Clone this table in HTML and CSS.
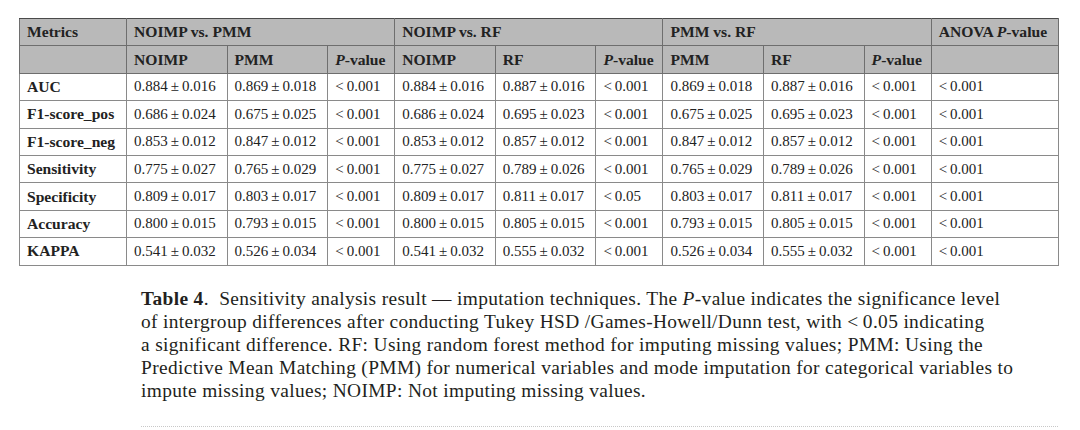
FILE: index.html
```html
<!DOCTYPE html>
<html>
<head>
<meta charset="utf-8">
<link rel="stylesheet" href="styles.css">
</head>
<body>
<div class="page">
  <table class="results">
    <colgroup>
      <col class="c-metric"><col class="c-val"><col class="c-val"><col class="c-p">
      <col class="c-val"><col class="c-val"><col class="c-p">
      <col class="c-val"><col class="c-val"><col class="c-p"><col class="c-anova">
    </colgroup>
    <thead>
      <tr class="h1">
        <th>Metrics</th>
        <th colspan="3">NOIMP vs. PMM</th>
        <th colspan="3">NOIMP vs. RF</th>
        <th colspan="3">PMM vs. RF</th>
        <th>ANOVA <i>P</i>-value</th>
      </tr>
      <tr class="h2">
        <th></th>
        <th>NOIMP</th><th>PMM</th><th><i>P</i>-value</th>
        <th>NOIMP</th><th>RF</th><th><i>P</i>-value</th>
        <th>PMM</th><th>RF</th><th><i>P</i>-value</th>
        <th></th>
      </tr>
    </thead>
    <tbody>
      <tr><th>AUC</th><td>0.884&#8201;±&#8201;0.016</td><td>0.869&#8201;±&#8201;0.018</td><td>&lt;&#8201;0.001</td><td>0.884&#8201;±&#8201;0.016</td><td>0.887&#8201;±&#8201;0.016</td><td>&lt;&#8201;0.001</td><td>0.869&#8201;±&#8201;0.018</td><td>0.887&#8201;±&#8201;0.016</td><td>&lt;&#8201;0.001</td><td>&lt;&#8201;0.001</td></tr>
      <tr><th>F1-score_pos</th><td>0.686&#8201;±&#8201;0.024</td><td>0.675&#8201;±&#8201;0.025</td><td>&lt;&#8201;0.001</td><td>0.686&#8201;±&#8201;0.024</td><td>0.695&#8201;±&#8201;0.023</td><td>&lt;&#8201;0.001</td><td>0.675&#8201;±&#8201;0.025</td><td>0.695&#8201;±&#8201;0.023</td><td>&lt;&#8201;0.001</td><td>&lt;&#8201;0.001</td></tr>
      <tr><th>F1-score_neg</th><td>0.853&#8201;±&#8201;0.012</td><td>0.847&#8201;±&#8201;0.012</td><td>&lt;&#8201;0.001</td><td>0.853&#8201;±&#8201;0.012</td><td>0.857&#8201;±&#8201;0.012</td><td>&lt;&#8201;0.001</td><td>0.847&#8201;±&#8201;0.012</td><td>0.857&#8201;±&#8201;0.012</td><td>&lt;&#8201;0.001</td><td>&lt;&#8201;0.001</td></tr>
      <tr><th>Sensitivity</th><td>0.775&#8201;±&#8201;0.027</td><td>0.765&#8201;±&#8201;0.029</td><td>&lt;&#8201;0.001</td><td>0.775&#8201;±&#8201;0.027</td><td>0.789&#8201;±&#8201;0.026</td><td>&lt;&#8201;0.001</td><td>0.765&#8201;±&#8201;0.029</td><td>0.789&#8201;±&#8201;0.026</td><td>&lt;&#8201;0.001</td><td>&lt;&#8201;0.001</td></tr>
      <tr><th>Specificity</th><td>0.809&#8201;±&#8201;0.017</td><td>0.803&#8201;±&#8201;0.017</td><td>&lt;&#8201;0.001</td><td>0.809&#8201;±&#8201;0.017</td><td>0.811&#8201;±&#8201;0.017</td><td>&lt;&#8201;0.05</td><td>0.803&#8201;±&#8201;0.017</td><td>0.811&#8201;±&#8201;0.017</td><td>&lt;&#8201;0.001</td><td>&lt;&#8201;0.001</td></tr>
      <tr><th>Accuracy</th><td>0.800&#8201;±&#8201;0.015</td><td>0.793&#8201;±&#8201;0.015</td><td>&lt;&#8201;0.001</td><td>0.800&#8201;±&#8201;0.015</td><td>0.805&#8201;±&#8201;0.015</td><td>&lt;&#8201;0.001</td><td>0.793&#8201;±&#8201;0.015</td><td>0.805&#8201;±&#8201;0.015</td><td>&lt;&#8201;0.001</td><td>&lt;&#8201;0.001</td></tr>
      <tr><th>KAPPA</th><td>0.541&#8201;±&#8201;0.032</td><td>0.526&#8201;±&#8201;0.034</td><td>&lt;&#8201;0.001</td><td>0.541&#8201;±&#8201;0.032</td><td>0.555&#8201;±&#8201;0.032</td><td>&lt;&#8201;0.001</td><td>0.526&#8201;±&#8201;0.034</td><td>0.555&#8201;±&#8201;0.032</td><td>&lt;&#8201;0.001</td><td>&lt;&#8201;0.001</td></tr>
    </tbody>
  </table>

  <p class="caption"><b>Table 4</b>.&nbsp; Sensitivity analysis result — imputation techniques. The <i>P</i>-value indicates the significance level<br>of intergroup differences after conducting Tukey HSD /Games-Howell/Dunn test, with &lt;&#8201;0.05 indicating<br>a significant difference. RF: Using random forest method for imputing missing values; PMM: Using the<br>Predictive Mean Matching (PMM) for numerical variables and mode imputation for categorical variables to<br>impute missing values; NOIMP: Not imputing missing values.</p>

  <div class="rule"></div>
</div>
</body>
</html>
```

FILE: styles.css
```css
html, body {
  margin: 0;
  padding: 0;
  background: #ffffff;
}

.page {
  padding: 18px 0 0 19px;
  font-family: "Liberation Serif", "Times New Roman", serif;
  color: #231f20;
}

.results {
  border-collapse: collapse;
  table-layout: fixed;
  width: 1039px;
  font-size: 15px;
  color: #222;
}

.c-metric { width: 107px; }
.c-val { width: 100.6px; }
.c-p { width: 67px; }
.c-anova { width: 127px; }

.results th,
.results td {
  border: 1px solid #8a8a8a;
  padding: 0 0 0 7px;
  height: 26.4px;
  text-align: left;
  white-space: nowrap;
  overflow: hidden;
}

.results th {
  font-size: 15.6px;
}

.results thead th {
  background: #b9b9b9;
  font-weight: bold;
  border-color: #6e6e6e;
}

.results thead tr.h1 th {
  border-top: 1px solid #4a4a4a;
}

.results tbody th {
  font-weight: bold;
}

.caption {
  margin: 21px 0 0 122px;
  font-size: 19.4px;
  letter-spacing: 0.35px;
  line-height: 23px;
}

.rule {
  margin: 24px 0 0 122px;
  width: 917px;
  border-top: 1px dotted #c8c8c8;
}
```
